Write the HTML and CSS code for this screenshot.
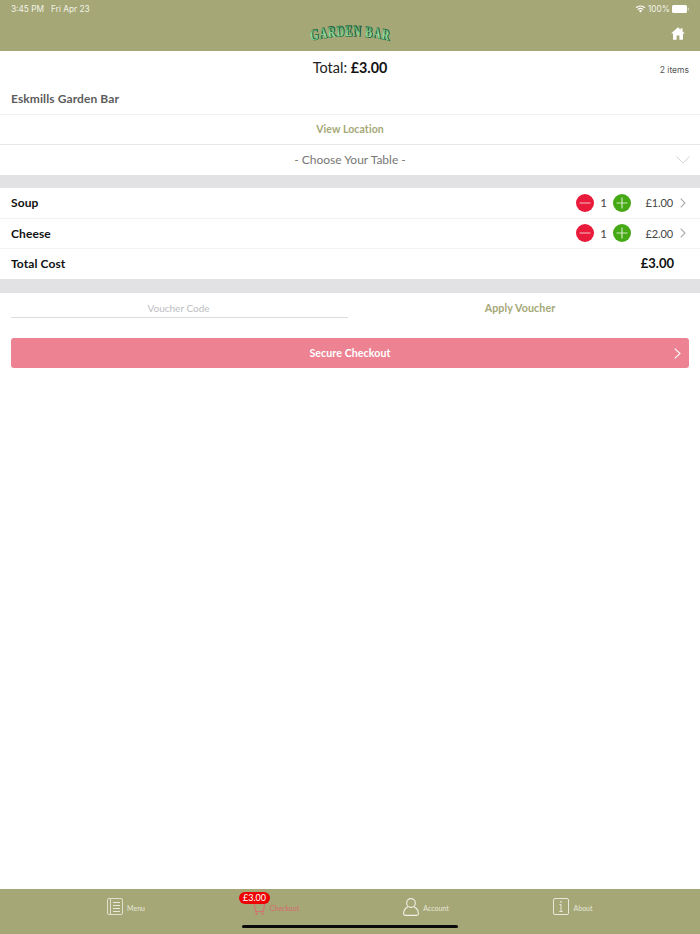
FILE: index.html
```html
<!DOCTYPE html>
<html lang="en">
<head>
<meta charset="utf-8">
<title>Checkout</title>
<link rel="stylesheet" href="styles.css">
</head>
<body>
<div class="page">
  <header class="header">
    <div class="status">
      <span>3:45 PM&nbsp;&nbsp;&nbsp;Fri Apr 23</span>
      <span class="status-right">
        <svg class="wifi" viewBox="0 0 14 10" width="11" height="8"><path d="M7 9.600 4.900 7.200a3 3 0 0 1 4.200 0z" fill="#fff"/><path d="M3.600 5.800a5 5 0 0 1 6.800 0M1.400 3.400a8 8 0 0 1 11.200 0" fill="none" stroke="#fff" stroke-width="1.400"/></svg>
        <span>100%</span>
        <svg class="battery" viewBox="0 0 17 8" width="17" height="8"><rect x="0" y="0" width="15" height="8" rx="1.500" fill="#fff"/><rect x="15.800" y="2.500" width="1" height="3" rx=".5" fill="#d8dcc4"/></svg>
      </span>
    </div>
    <div class="navbar">
      <svg class="logo" viewBox="0 0 84 24" width="84" height="24">
        <defs>
          <path id="arc" d="M2 19 Q60 9 118 19"/>
          <linearGradient id="lg" x1="0" y1="0" x2="0" y2="1"><stop offset="0" stop-color="#1e7a4c"/><stop offset=".55" stop-color="#8fe0a0"/><stop offset="1" stop-color="#5cc488"/></linearGradient>
        </defs>
        <g transform="scale(.7 1)">
          <text class="logo-shadow" x="0.800"><textPath href="#arc" startOffset="50%" text-anchor="middle">GARDEN BAR</textPath></text>
          <text class="logo-text" fill="url(#lg)"><textPath href="#arc" startOffset="50%" text-anchor="middle">GARDEN BAR</textPath></text>
        </g>
      </svg>
      <svg class="home" viewBox="0 0 16 15" width="14" height="13"><path d="M8 .3 0 7.600h2.300V14.700h4.100V9.800h3.200v4.900h4.100V7.600H16L13.200 5V1.300h-2.100v1.800z" fill="#fff"/></svg>
    </div>
  </header>

  <main class="main">
    <div class="total-row">
      <div class="total">Total: <b>£3.00</b></div>
      <div class="count">2 items</div>
    </div>
    <div class="venue">Eskmills Garden Bar</div>
    <div class="location">View Location</div>
    <div class="table-select">
      <span>- Choose Your Table -</span>
      <svg class="select-chev" viewBox="0 0 14 8" width="14" height="8"><path d="M.5.5 7 7 13.500.5" fill="none" stroke="#d4d4d4" stroke-width="1"/></svg>
    </div>
    <div class="gap"></div>
    <div class="item">
      <span class="item-name">Soup</span>
      <span class="btn minus"><svg viewBox="0 0 18 18" width="18" height="18"><path d="M3.500 9h11" stroke="#f4a3b0" stroke-width="1.200"/></svg></span>
      <span class="qty">1</span>
      <span class="btn plus"><svg viewBox="0 0 18 18" width="18" height="18"><path d="M3.500 9h11M9 3.500v11" stroke="#cfe8c0" stroke-width="1.200"/></svg></span>
      <span class="price">£1.00</span>
      <svg class="chev" viewBox="0 0 6 10" width="6" height="10"><path d="M.7.7 5 5 .7 9.300" fill="none" stroke="#aaa" stroke-width="1.100"/></svg>
    </div>
    <div class="item">
      <span class="item-name">Cheese</span>
      <span class="btn minus"><svg viewBox="0 0 18 18" width="18" height="18"><path d="M3.500 9h11" stroke="#f4a3b0" stroke-width="1.200"/></svg></span>
      <span class="qty">1</span>
      <span class="btn plus"><svg viewBox="0 0 18 18" width="18" height="18"><path d="M3.500 9h11M9 3.500v11" stroke="#cfe8c0" stroke-width="1.200"/></svg></span>
      <span class="price">£2.00</span>
      <svg class="chev" viewBox="0 0 6 10" width="6" height="10"><path d="M.7.7 5 5 .7 9.300" fill="none" stroke="#aaa" stroke-width="1.100"/></svg>
    </div>
    <div class="item item-total">
      <span class="item-name">Total Cost</span>
      <span class="total-price">£3.00</span>
    </div>
    <div class="gap gap-2"></div>
    <div class="voucher">
      <div class="voucher-input">Voucher Code</div>
      <div class="voucher-apply">Apply Voucher</div>
    </div>
    <div class="checkout">
      <span>Secure Checkout</span>
      <svg class="checkout-chev" viewBox="0 0 7 11" width="7" height="11"><path d="M.7.6 6 5.500.7 10.400" fill="none" stroke="#fff" stroke-width="1.100"/></svg>
    </div>
  </main>

  <nav class="tabbar">
    <div class="tab">
      <svg viewBox="0 0 16 17" width="16" height="17" class="tab-icon"><rect x=".5" y=".5" width="15" height="16" rx="1.500" fill="none" stroke="#dfe1cd"/><path d="M3.500 .5v16" stroke="#dfe1cd"/><path d="M6 4.500h7M6 7.500h7M6 10.500h7M6 13.500h7" stroke="#e6e8d8"/></svg>
      <span class="tab-label">Menu</span>
    </div>
    <div class="tab tab-active">
      <span class="badge">£3.00</span>
      <svg viewBox="0 0 13 12" width="13" height="12" class="tab-icon cart"><path d="M0 .6h12.500M1.300 .6l1.300 8h7.800l1.300-8" fill="none" stroke="#d96a70" stroke-width="1"/><circle cx="3.500" cy="10.700" r="1" fill="#d96a70"/><circle cx="9.500" cy="10.700" r="1" fill="#d96a70"/></svg>
      <span class="tab-label">Checkout</span>
    </div>
    <div class="tab">
      <svg viewBox="0 0 16 18" width="16" height="18" class="tab-icon"><ellipse cx="8" cy="5" rx="4.300" ry="4.400" fill="none" stroke="#f0f1e6" stroke-width="1.100"/><path d="M5 8.700C2.300 10 .6 12.500.6 15.800c0 1 .5 1.600 1.400 1.600h12c.9 0 1.400-.6 1.400-1.600 0-3.300-1.700-5.800-4.400-7.100" fill="none" stroke="#f0f1e6" stroke-width="1.100"/></svg>
      <span class="tab-label">Account</span>
    </div>
    <div class="tab tab-last">
      <svg viewBox="0 0 16 17" width="16" height="17" class="tab-icon"><rect x=".5" y=".5" width="15" height="16" rx="1.500" fill="none" stroke="#e6e8d8"/><path d="M8 6.500v7M6.500 6.500H8M6.300 13.500h3.400" stroke="#e6e8d8" fill="none"/><circle cx="8" cy="3.800" r=".9" fill="#e6e8d8"/></svg>
      <span class="tab-label">About</span>
    </div>
    <div class="home-indicator"></div>
  </nav>
</div>
</body>
</html>
```

FILE: styles.css
```css
* { box-sizing: border-box; }
html, body { margin: 0; padding: 0; }
body { font-family: Lato, "Noto Sans", sans-serif; background: #fff; }
.page { width: 700px; height: 934px; display: flex; flex-direction: column; overflow: hidden; }

.header { background: #a5a776; height: 51px; flex: none; color: #fff; }
.status { height: 17px; padding: 1px 11px 0; display: flex; justify-content: space-between; align-items: center; font: 8.300px/15px Inter, "Liberation Sans", sans-serif; color: #f2f3e8; }
.status-right { display: flex; align-items: center; gap: 2px; }
.wifi { display: block; }
.battery { display: block; }
.navbar { height: 34px; display: flex; align-items: center; justify-content: center; position: relative; }
.logo { display: block; }
.logo text { font: bold 15.500px "Liberation Serif", serif; letter-spacing: 1px; }
.logo-shadow { fill: #14502f; stroke: #14502f; stroke-width: .8px; }
.home { position: absolute; right: 15px; top: 10px; }

.main { flex: 1; min-height: 0; }
.total-row { height: 33px; display: flex; align-items: center; justify-content: center; position: relative; }
.total { font-size: 14.500px; color: #222; padding-bottom: 1px; }
.total b { font-weight: 700; color: #111; font-size: 14.300px; }
.count { position: absolute; right: 11px; top: 13px; font: 8.500px/12px Inter, sans-serif; color: #555; }
.venue { height: 31px; padding: 0 11px; font-size: 12px; font-weight: 700; color: #5c5c5c; line-height: 30px; border-bottom: 1px solid #f1f1f1; letter-spacing: .1px; }
.location { height: 30px; text-align: center; font-size: 10.500px; font-weight: 700; color: #a5a776; line-height: 29px; border-bottom: 1px solid #e7e7e7; letter-spacing: .1px; }
.table-select { height: 30px; padding-bottom: 2px; display: flex; align-items: center; justify-content: center; position: relative; font-size: 12px; color: #777; }
.select-chev { position: absolute; right: 10px; top: 11px; }
.gap { height: 13px; background: #e2e2e4; }
.gap-2 { height: 14px; }
.item { height: 30.500px; padding: 0 14px 0 11px; display: flex; align-items: center; border-bottom: 1px solid #f3f3f3; }
.item-name { flex: 1; font-size: 12px; font-weight: 700; color: #111; letter-spacing: .1px; }
.btn { width: 18px; height: 18px; border-radius: 50%; display: block; flex: none; }
.btn svg { display: block; }
.minus { background: #ea1a3a; }
.plus { background: #45a815; }
.qty { width: 19px; text-align: center; font-size: 11.500px; color: #444; }
.price { width: 42px; text-align: right; font-size: 11px; color: #444; letter-spacing: -.1px; }
.chev { margin-left: 7px; }
.item-total { height: 30px; padding-bottom: 2px; border-bottom: 0; padding-right: 26px; }
.total-price { font-size: 13px; font-weight: 700; color: #111; }

.voucher { height: 45px; padding: 0 11px; display: flex; }
.voucher-input { width: 337px; height: 25px; padding-right: 2px; border-bottom: 1px solid #dcdcdc; text-align: center; font-size: 10px; color: #bdbdc2; line-height: 30px; }
.voucher-apply { flex: 1; text-align: center; font-size: 10.700px; font-weight: 700; color: #a5a776; line-height: 30px; letter-spacing: .1px; padding-left: 3px; }
.checkout { height: 30px; margin: 0 11px; border-radius: 3px; background: #ec8292; color: #fff; font-size: 10.600px; font-weight: 700; display: flex; align-items: center; justify-content: center; position: relative; letter-spacing: .1px; }
.checkout-chev { position: absolute; right: 8px; top: 10px; }

.tabbar { height: 45px; flex: none; background: #a5a776; display: flex; padding: 0 49px 0 51px; position: relative; }
.tab { width: 150px; flex: none; display: flex; align-items: center; justify-content: center; gap: 4px; font-size: 7px; color: #e6e8d8; padding-bottom: 10px; position: relative; }
.tab-label { margin-top: 2px; }
.tab-last { padding-right: 6px; }
.tab-icon { display: block; flex: none; }
.tab-active { color: #d96a70; }
.cart { margin-top: 5px; }
.badge { position: absolute; left: 38px; top: 3px; width: 31px; height: 12px; border-radius: 6px; background: #ee0000; color: #fff; font-size: 9px; line-height: 12px; text-align: center; }
.home-indicator { position: absolute; left: 242px; bottom: 6px; width: 216px; height: 3.500px; border-radius: 2px; background: #0a0a0a; }
```
